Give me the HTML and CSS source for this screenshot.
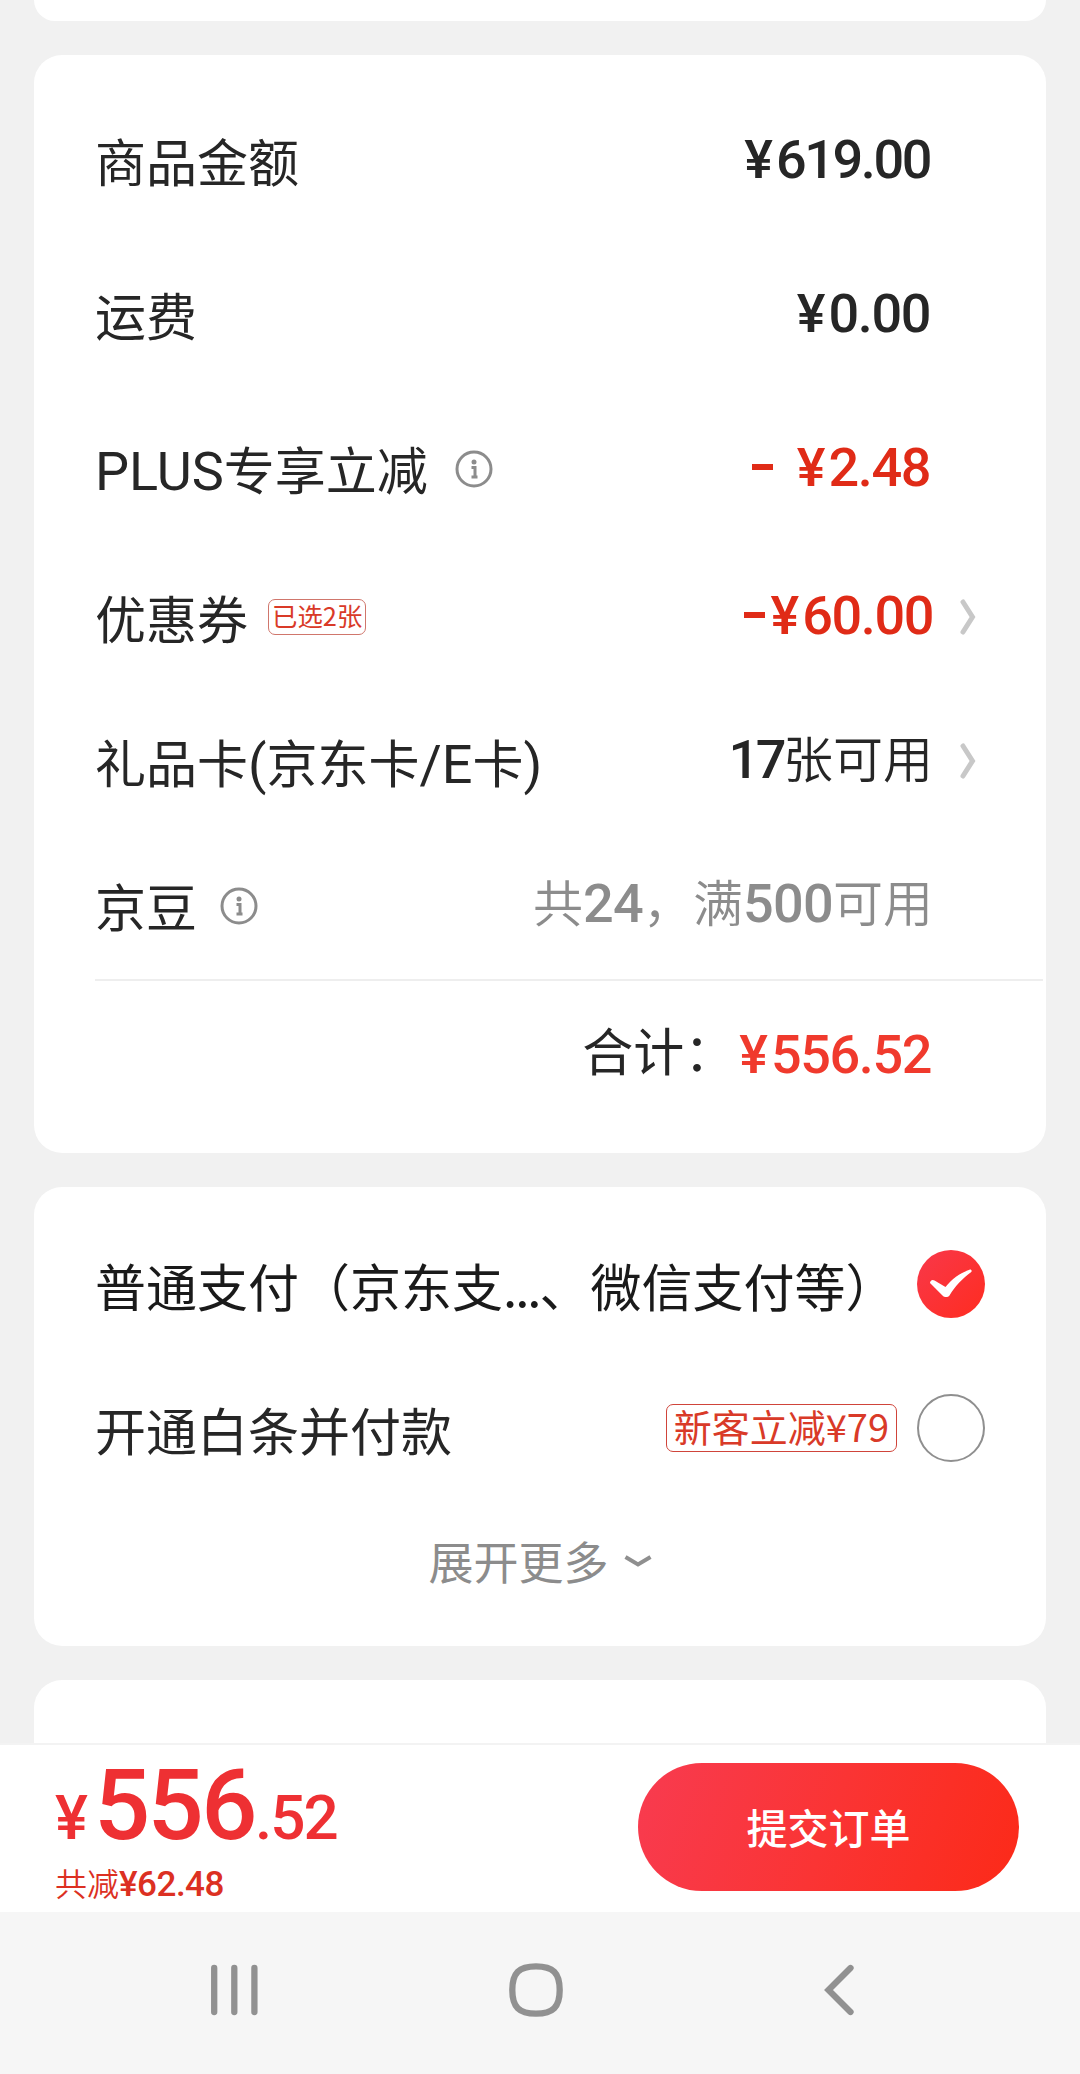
FILE: index.html
```html
<!DOCTYPE html>
<html lang="zh-CN">
  <head>
    <meta charset="UTF-8" />
    <meta name="viewport" content="width=device-width, initial-scale=1.0" />
    <title>填写订单</title>
    <link rel="stylesheet" href="styles.css">
  </head>
  <body>
    <main class="content">
      <section class="card card-top"></section>

      <section class="card summary">
        <div class="row row-tall">
          <span class="label">商品金额</span>
          <span class="value"><b class="num num-goods"><span class="yen">¥</span>619.00</b></span>
          <span class="arrow"></span>
        </div>
        <div class="row row-tall">
          <span class="label">运费</span>
          <span class="value"><b class="num"><span class="yen">¥</span>0.00</b></span>
          <span class="arrow"></span>
        </div>
        <div class="row row-tall">
          <span class="label"><span class="latin">PLUS</span>专享立减</span>
          <svg class="info info-plus" viewBox="0 0 38 38">
            <circle cx="19" cy="19" r="17" />
            <path d="M16.500 17.500h3.500v9.500M16.500 27h6" />
            <circle class="dot" cx="19" cy="12" r="2.500" />
          </svg>
          <span class="value red"><b class="num"><span class="dash dash-wide"></span><span class="yen">¥</span>2.48</b></span>
          <span class="arrow"></span>
        </div>
        <div class="row">
          <span class="label">优惠券</span>
          <span class="tag">已选2张</span>
          <span class="value red"><b class="num num-coupon"><span class="dash"></span><span class="yen">¥</span>60.00</b></span>
          <span class="arrow">
            <svg width="16" height="38" viewBox="0 0 16 38"><path d="M3 4l9.500 15L3 34" /></svg>
          </span>
        </div>
        <div class="row">
          <span class="label">礼品卡<span class="latin">(</span>京东卡<span class="latin">/E</span>卡<span class="latin">)</span></span>
          <span class="value value-text"><b class="num num-cards">17</b>张可用</span>
          <span class="arrow">
            <svg width="16" height="38" viewBox="0 0 16 38"><path d="M3 4l9.500 15L3 34" /></svg>
          </span>
        </div>
        <div class="row">
          <span class="label">京豆</span>
          <svg class="info" viewBox="0 0 38 38">
            <circle cx="19" cy="19" r="17" />
            <path d="M16.500 17.500h3.500v9.500M16.500 27h6" />
            <circle class="dot" cx="19" cy="12" r="2.500" />
          </svg>
          <span class="value value-text grey">共<b class="num num-bean">24</b>，满<b class="num num-bean">500</b>可用</span>
          <span class="arrow"></span>
        </div>
        <div class="total">
          <span class="total-label">合计：</span>
          <b class="num total-num"><span class="yen">¥</span>556.52</b>
        </div>
      </section>

      <section class="card pay">
        <div class="row pay-row">
          <span class="label label-dark">普通支付（京东支<span class="dots">...</span>、微信支付等）</span>
          <svg class="check" viewBox="0 0 68 68">
            <defs>
              <linearGradient id="checkBg" x1="0" y1="0" x2="1" y2="1">
                <stop offset="0" stop-color="#f8384a" />
                <stop offset="1" stop-color="#ff2c20" />
              </linearGradient>
            </defs>
            <circle cx="34" cy="34" r="34" fill="url(#checkBg)" />
            <path d="M13 33c0-2 2-4 4.500-2.500L28.500 37C35 29 43 23 52.500 19.700c2-.5 2.800 1.300 1.500 2.500C46 28 38 36 32.500 45.500c-1.500 2-5 2-6.500.5z" fill="#fff" />
          </svg>
        </div>
        <div class="row pay-row">
          <span class="label">开通白条并付款</span>
          <span class="tag tag-big">新客立减¥79</span>
          <span class="radio"></span>
        </div>
        <div class="more">
          <span>展开更多</span>
          <svg width="28" height="14" viewBox="0 0 28 14"><path d="M1.500 3L14 10.500 26.500 3" /></svg>
        </div>
      </section>

      <section class="card card-next"></section>
    </main>

    <footer class="bar">
      <div class="price">
        <div class="price-main">
          <span class="small sign">¥</span><span class="big">556</span><span class="small">.52</span>
        </div>
        <div class="price-off">共减<b class="num">¥62.48</b></div>
      </div>
      <button class="submit">提交订单</button>
    </footer>

    <nav class="nav">
      <svg width="54" height="54" viewBox="0 0 54 54"><path d="M7.200 5v44M27.300 5v44M47.400 5v44" stroke-linecap="round" /></svg>
      <svg width="54" height="54" viewBox="0 0 54 54"><path d="M27 3.300C44 3.300 50.700 10 50.700 27S44 50.700 27 50.700 3.300 44 3.300 27 10 3.300 27 3.300z" /></svg>
      <svg width="54" height="54" viewBox="0 0 54 54"><path d="M39.500 5L17.500 27l22 22" stroke-linecap="round" /></svg>
    </nav>
  </body>
</html>
```

FILE: styles.css
```css
* {
  box-sizing: border-box;
}
body {
  margin: 0;
  height: 2074px;
  display: flex;
  flex-direction: column;
  overflow: hidden;
  background-color: #f1f1f1;
  color: #262626;
  font-family: "Noto Sans CJK SC", sans-serif;
  font-size: 51px;
  line-height: 72px;
  white-space: nowrap;
}
svg {
  display: block;
  flex: none;
  fill: none;
}
.content {
  height: 1743px;
  padding: 0 34px;
  display: flex;
  flex-direction: column;
  gap: 34px;
  overflow: hidden;
}
.card {
  flex: none;
  background-color: #fff;
  border-radius: 28px;
}
.card-top {
  height: 21px;
  border-radius: 0 0 28px 28px;
}
.summary {
  height: 1098px;
  padding-top: 30px;
}
.row {
  display: flex;
  align-items: center;
  height: 144px;
  padding-left: 61px;
}
.row-tall {
  height: 154px;
}
.label {
  padding-bottom: 5px;
}
.label-dark {
  color: #1a1a1a;
}
.latin {
  font-family: Roboto, sans-serif;
  font-size: 54px;
  line-height: 1;
}
.value {
  margin-left: auto;
  padding-bottom: 11px;
  font-size: 50px;
  font-weight: 350;
}
.row-tall .value {
  padding-bottom: 8px;
}
.value-text {
  margin-right: -3px;
}
.num {
  font-family: Roboto, "Noto Sans CJK SC", sans-serif;
  font-size: 54px;
  font-weight: 500;
  letter-spacing: -1.4px;
}
.yen {
  letter-spacing: 3px;
}
.num-goods {
  letter-spacing: -2.4px;
}
.num-coupon {
  margin-right: -3px;
}
.num-cards {
  letter-spacing: -3.5px;
}
.num-bean {
  letter-spacing: -0.7px;
}
.red {
  color: #e02b17;
}
.grey {
  color: #8c8c8c;
}
.dash {
  display: inline-block;
  width: 21px;
  height: 6px;
  margin-right: 6px;
  background-color: currentColor;
  vertical-align: 16px;
}
.dash-wide {
  margin-right: 24px;
}
.arrow {
  width: 116px;
  padding: 0 0 4px 30px;
}
.arrow path {
  stroke: #c8c8c8;
  stroke-width: 5;
  stroke-linecap: round;
}
.info {
  width: 38px;
  height: 38px;
  margin: 0 0 3px 23px;
  stroke: #8c8c8c;
  stroke-width: 3;
}
.info-plus {
  margin-left: 27px;
}
.info .dot {
  fill: #8c8c8c;
  stroke: none;
}
.tag {
  height: 36px;
  margin: 0 0 4px 20px;
  padding: 0 3px;
  border: 1px solid #d0766c;
  border-radius: 7px;
  color: #d93a28;
  font-size: 25.4px;
  line-height: 30px;
}
.total {
  display: flex;
  justify-content: flex-end;
  align-items: center;
  height: 150px;
  margin: 0 3px 0 61px;
  padding-right: 112px;
  border-top: 2px solid #eee;
}
.total-label {
  padding: 0 4px 13px 0;
}
.total-num {
  color: #f03a2d;
}
.pay {
  height: 459px;
  padding-top: 25px;
}
.pay-row {
  padding-right: 61px;
}
.pay-row .label {
  margin-right: auto;
  padding: 1px 0 0;
}
.dots {
  letter-spacing: -2px;
}
.check,
.radio {
  width: 68px;
  height: 68px;
}
.radio {
  margin-left: 20px;
  border: 2px solid #8f8f8f;
  border-radius: 50%;
}
.tag-big {
  height: 48px;
  margin: 0;
  padding: 0 7px;
  border-color: #d0443a;
  font-size: 38px;
  line-height: 42px;
}
.more {
  display: flex;
  justify-content: center;
  align-items: center;
  gap: 15px;
  height: 121px;
  color: #8c8c8c;
  font-size: 45px;
}
.more path {
  stroke: #8f8f8f;
  stroke-width: 4;
}
.card-next {
  height: 200px;
}
.bar {
  display: flex;
  justify-content: space-between;
  height: 169px;
  padding: 18px 61px 0 55px;
  border-top: 2px solid #f3f3f3;
  background-color: #fff;
}
.price-main {
  height: 86px;
  color: #ee3033;
  font-family: Roboto, sans-serif;
  font-weight: 500;
  line-height: 84px;
}
.small {
  font-size: 62px;
  letter-spacing: -2px;
}
.sign {
  letter-spacing: 6px;
}
.big {
  font-size: 99px;
  letter-spacing: -2.6px;
}
.price-off {
  margin-top: 11px;
  color: #dc3022;
  font-size: 32px;
  font-weight: 350;
  line-height: 44px;
}
.price-off .num {
  font-size: 35px;
  letter-spacing: -0.5px;
}
.submit {
  width: 381px;
  height: 128px;
  padding-bottom: 4px;
  border: none;
  border-radius: 64px;
  background: linear-gradient(110deg, #f83b50, #fa3434 50%, #fc2a18);
  color: #fff;
  font-family: inherit;
  font-size: 41px;
  font-weight: 500;
}
.nav {
  display: flex;
  justify-content: center;
  gap: 248px;
  height: 162px;
  padding: 51px 8px 0 0;
  background-color: #f6f6f6;
}
.nav path {
  stroke: #919191;
  stroke-width: 6.3;
}
```
